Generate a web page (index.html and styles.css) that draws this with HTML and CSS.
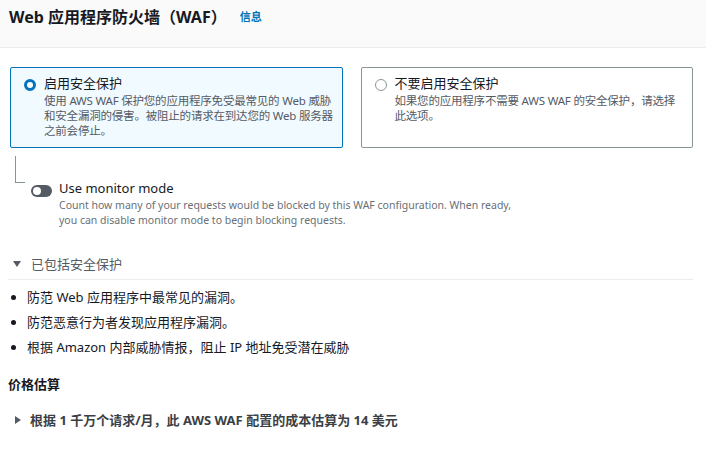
FILE: index.html
```html
<!DOCTYPE html>
<html lang="zh-CN">
  <head>
    <meta charset="UTF-8" />
    <meta name="viewport" content="width=device-width, initial-scale=1.0" />
    <title>Web 应用程序防火墙（WAF）</title>
    <link rel="stylesheet" href="styles.css">
  </head>
  <body>
    <div class="header">
      <h2 class="title">Web 应用程序防火墙（WAF）</h2>
      <a class="info-link" href="#">信息</a>
    </div>

    <div class="options">
      <label class="option selected">
        <span class="radio checked"></span>
        <span class="option-text">
          <span class="option-title">启用安全保护</span>
          <span class="option-desc">使用 AWS WAF 保护您的应用程序免受最常见的 Web 威胁和安全漏洞的侵害。被阻止的请求在到达您的 Web 服务器之前会停止。</span>
        </span>
      </label>

      <label class="option">
        <span class="radio"></span>
        <span class="option-text">
          <span class="option-title">不要启用安全保护</span>
          <span class="option-desc">如果您的应用程序不需要 AWS WAF 的安全保护，请选择此选项。</span>
        </span>
      </label>
    </div>

    <div class="monitor">
      <div class="tree-line"></div>
      <div class="toggle"><span class="knob"></span></div>
      <div class="monitor-text">
        <div class="monitor-title">Use monitor mode</div>
        <div class="monitor-desc">Count how many of your requests would be blocked by this WAF configuration. When ready, you can disable monitor mode to begin blocking requests.</div>
      </div>
    </div>

    <div class="expander">
      <span class="caret-down"></span>
      <span>已包括安全保护</span>
    </div>

    <ul class="protections">
      <li>防范 Web 应用程序中最常见的漏洞。</li>
      <li>防范恶意行为者发现应用程序漏洞。</li>
      <li>根据 Amazon 内部威胁情报，阻止 IP 地址免受潜在威胁</li>
    </ul>

    <h3 class="section-title">价格估算</h3>

    <div class="estimate">
      <span class="caret-right"></span>
      <span>根据 1 千万个请求/月，此 AWS WAF 配置的成本估算为 14 美元</span>
    </div>
  </body>
</html>
```

FILE: styles.css
```css
body {
  margin: 0;
  font-family: "Noto Sans", "Noto Sans CJK SC", sans-serif;
  color: #16191f;
  background: #fff;
}
.header {
  height: 48px;
  background: #fafafa;
  border-bottom: 1px solid #eaeded;
  display: flex;
  align-items: flex-start;
  padding: 6px 9px 0;
  box-sizing: border-box;
}
.title {
  margin: 0;
  font-size: 16px;
  line-height: 22px;
  font-weight: bold;
  color: #16191f;
}
.info-link {
  margin-left: 13px;
  margin-top: 1px;
  font-size: 11px;
  line-height: 20px;
  font-weight: bold;
  color: #0073bb;
  text-decoration: none;
}
.options {
  display: grid;
  grid-template-columns: 1fr 1fr;
  gap: 18px;
  padding: 0 13px 0 10px;
  margin-top: 19px;
}
.option {
  display: flex;
  gap: 8px;
  border: 1px solid #879596;
  border-radius: 2px;
  padding: 6px 8px 9px 13px;
}
.option.selected {
  border-color: #0073bb;
  background: #f1faff;
}
.radio {
  flex: none;
  width: 12px;
  height: 12px;
  margin-top: 5px;
  border-radius: 50%;
  border: 1px solid #879596;
  box-sizing: border-box;
  background: #fff;
}
.radio.checked {
  border: 3.5px solid #0073bb;
}
.option-text {
  display: flex;
  flex-direction: column;
}
.option-title {
  font-size: 13px;
  line-height: 19px;
}
.option-desc {
  font-size: 11.5px;
  letter-spacing: -0.2px;
  line-height: 15px;
  color: #545b64;
}
.monitor {
  display: flex;
  align-items: flex-start;
  padding-left: 15px;
  margin-top: 8px;
}
.tree-line {
  flex: none;
  width: 9px;
  height: 26px;
  border-left: 1px solid #879596;
  border-bottom: 1px solid #879596;
}
.toggle {
  flex: none;
  width: 21px;
  height: 12px;
  border-radius: 6px;
  background: #545b64;
  margin-left: 6px;
  margin-top: 29px;
  position: relative;
}
.knob {
  position: absolute;
  left: 2px;
  top: 2px;
  width: 8px;
  height: 8px;
  border-radius: 50%;
  background: #fff;
}
.monitor-text {
  margin-left: 7px;
  margin-top: 22px;
  max-width: 462px;
}
.monitor-title {
  font-size: 13px;
  line-height: 20px;
}
.monitor-desc {
  font-size: 10.5px;
  line-height: 15px;
  color: #687078;
}
.expander {
  display: flex;
  align-items: center;
  gap: 10px;
  margin: 27px 13px 0 8px;
  padding: 0 0 6px 5px;
  border-bottom: 1px solid #eaeded;
  font-size: 13px;
  line-height: 18px;
  color: #545b64;
}
.caret-down {
  width: 0;
  height: 0;
  border-left: 4px solid transparent;
  border-right: 4px solid transparent;
  border-top: 6px solid #545b64;
}
.protections {
  margin: 5px 0 0;
  padding-left: 27px;
  font-size: 13px;
  line-height: 25px;
}
.section-title {
  margin: 14px 0 0 8px;
  font-size: 13px;
  line-height: 20px;
  font-weight: bold;
}
.estimate {
  display: flex;
  align-items: center;
  gap: 9px;
  margin: 16px 0 0 15px;
  font-size: 13px;
  line-height: 20px;
  font-weight: bold;
  color: #3b3f45;
}
.caret-right {
  width: 0;
  height: 0;
  border-top: 4px solid transparent;
  border-bottom: 4px solid transparent;
  border-left: 6px solid #545b64;
}
```
